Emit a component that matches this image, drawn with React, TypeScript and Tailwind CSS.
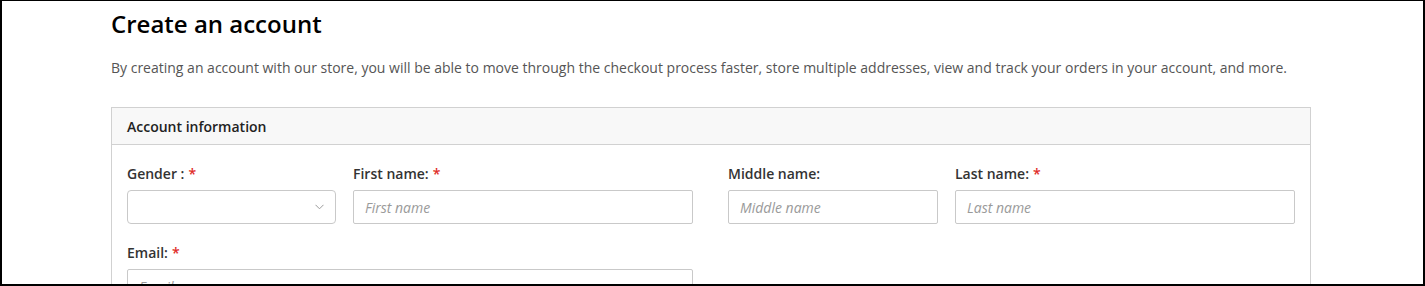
import React from "react";

const font = { fontFamily: '"Open Sans", "Liberation Sans", sans-serif' };

const Label: React.FC<{ text: string; required?: boolean }> = ({ text, required }) => (
  <label className="block h-5 text-[14px] leading-5 font-semibold text-[#333]">
    {text}
    {required && <span className="ml-1 text-[#e02b27]">*</span>}
  </label>
);

const TextInput: React.FC<{ placeholder: string }> = ({ placeholder }) => (
  <input
    type="text"
    placeholder={placeholder}
    className="mt-[6px] block h-[34px] w-full rounded-[2px] border border-[#c9c9c9] bg-white px-[11px] text-[14px] italic text-[#333] outline-none placeholder:text-[#9a9a9a]"
  />
);

const App: React.FC = () => {
  return (
    <div
      style={font}
      className="h-[286px] w-[1425px] overflow-hidden border-t border-r-2 border-b-2 border-l-2 border-black bg-white"
    >
      <div className="ml-[109px] w-[1200px] pt-[7px]">
        <h1 className="text-[24px] leading-[31px] font-semibold text-black">Create an account</h1>
        <p className="mt-[19px] text-[14px] leading-5 text-[#555]">
          By creating an account with our store, you will be able to move through the checkout process faster, store
          multiple addresses, view and track your orders in your account, and more.
        </p>

        {/* Account information panel */}
        <div className="mt-[29px] border border-[#d1d1d1]">
          <div className="flex h-[37px] items-center border-b border-[#d1d1d1] bg-[#f8f8f8] px-[15px]">
            <h2 className="text-[14px] font-semibold text-[#222]">Account information</h2>
          </div>

          <div className="px-[15px] pt-[19px]">
            <div className="grid grid-cols-[566px_1fr] gap-x-[35px]">
              <div className="grid grid-cols-[209px_1fr] gap-x-[17px]">
                <div>
                  <Label text="Gender :" required />
                  <div className="relative mt-[6px] h-[34px] rounded-[4px] border border-[#c9c9c9] bg-white">
                    <svg
                      className="absolute top-[13px] right-[11px]"
                      width="9"
                      height="6"
                      viewBox="0 0 9 6"
                      fill="none"
                      stroke="#9a9a9a"
                      strokeWidth="1"
                    >
                      <path d="M0.5 0.8 L4.5 4.8 L8.5 0.8" />
                    </svg>
                  </div>
                </div>
                <div>
                  <Label text="First name:" required />
                  <TextInput placeholder="First name" />
                </div>
              </div>
              <div className="grid grid-cols-[210px_1fr] gap-x-[17px]">
                <div>
                  <Label text="Middle name:" />
                  <TextInput placeholder="Middle name" />
                </div>
                <div>
                  <Label text="Last name:" required />
                  <TextInput placeholder="Last name" />
                </div>
              </div>
            </div>

            <div className="mt-[19px] grid grid-cols-[566px_1fr] gap-x-[35px]">
              <div>
                <Label text="Email:" required />
                <TextInput placeholder="Email" />
              </div>
            </div>
            <div className="h-[20px]" />
          </div>
        </div>
      </div>
    </div>
  );
};

export default App;
